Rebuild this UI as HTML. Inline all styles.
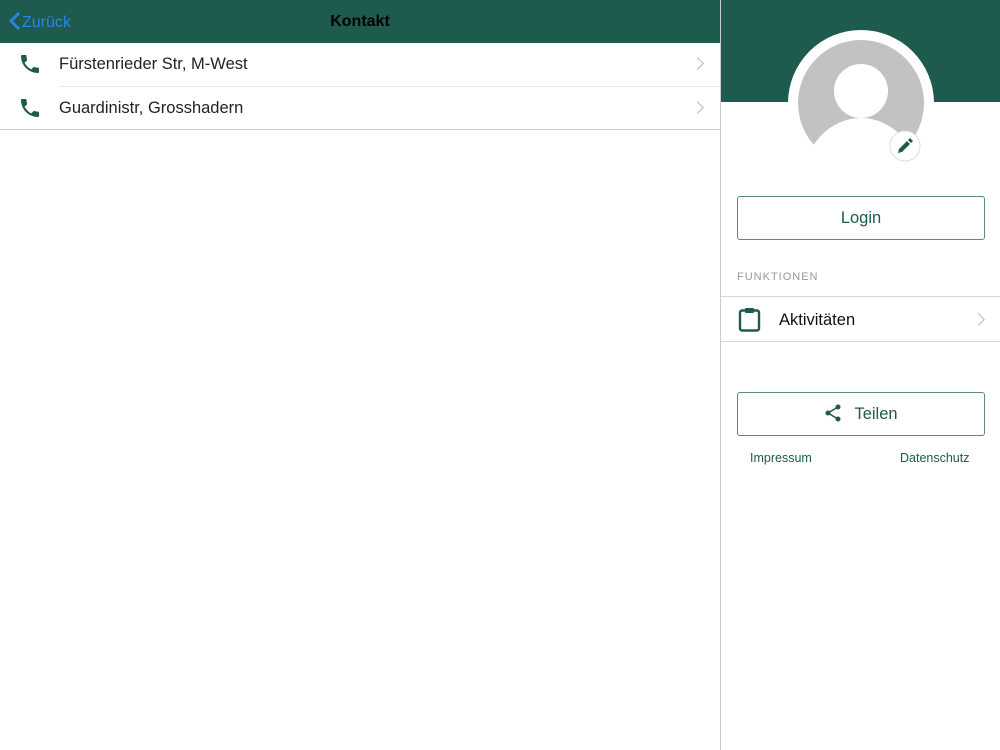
<!DOCTYPE html>
<html><head><meta charset="utf-8"><style>
*{margin:0;padding:0;box-sizing:border-box}
body{width:1000px;height:750px;position:relative;background:#fff;font-family:"Liberation Sans",Arial,sans-serif;overflow:hidden}
.hdr{position:absolute;left:0;top:0;width:720px;height:43px;background:#1e5a4e}
.back{position:absolute;left:8px;top:12px;color:#2a86e6;font-size:16px}
.title{position:absolute;left:0;width:720px;top:13px;text-align:center;font-weight:bold;font-size:16px;color:#000}
.row{position:absolute;left:0;width:720px;height:43px}
.row .t{position:absolute;left:59px;top:12px;font-size:16.5px;color:#222}
.chev{position:absolute;width:9px;height:9px;border-right:1.5px solid #bbb;border-top:1.5px solid #bbb;transform:rotate(45deg)}
.line{position:absolute;height:1px;background:#ddd}
.side{position:absolute;left:720px;top:0;width:280px;height:750px;border-left:1px solid #ccc}
.btn{position:absolute;left:16px;width:248px;height:44px;border:1.5px solid #5a8a7f;border-radius:3px;color:#1e5a4e;font-size:16.5px;text-align:center;line-height:42px}
</style></head><body>
<div class="hdr"><div class="back"><svg width="14" height="18" viewBox="0 0 14 18" style="vertical-align:-3px"><path d="M11 1 L3 9 L11 17" stroke="#2a86e6" stroke-width="2.8" fill="none"/></svg>Zurück</div><div class="title">Kontakt</div></div>
<div class="row" style="top:43px">
<svg style="position:absolute;left:18px;top:9px" width="24" height="24" viewBox="0 0 24 24"><path fill="#1e5a4e" d="M6.6 10.8c1.4 2.8 3.8 5.1 6.6 6.6l2.2-2.2c.3-.3.7-.4 1-.2 1.1.4 2.3.6 3.6.6.6 0 1 .4 1 1V20c0 .6-.4 1-1 1C10.6 21 3 13.4 3 4c0-.6.4-1 1-1h3.5c.6 0 1 .4 1 1 0 1.3.2 2.5.6 3.6.1.3 0 .7-.2 1L6.6 10.8z"/></svg>
<div class="t">Fürstenrieder Str, M-West</div><div class="chev" style="left:693px;top:16px"></div></div>
<div class="line" style="left:59px;top:86px;width:661px;background:#e6e6e6"></div>
<div class="row" style="top:87px">
<svg style="position:absolute;left:18px;top:9px" width="24" height="24" viewBox="0 0 24 24"><path fill="#1e5a4e" d="M6.6 10.8c1.4 2.8 3.8 5.1 6.6 6.6l2.2-2.2c.3-.3.7-.4 1-.2 1.1.4 2.3.6 3.6.6.6 0 1 .4 1 1V20c0 .6-.4 1-1 1C10.6 21 3 13.4 3 4c0-.6.4-1 1-1h3.5c.6 0 1 .4 1 1 0 1.3.2 2.5.6 3.6.1.3 0 .7-.2 1L6.6 10.8z"/></svg>
<div class="t">Guardinistr, Grosshadern</div><div class="chev" style="left:693px;top:16px"></div></div>
<div class="line" style="left:0;top:129px;width:720px;background:#ccc"></div>
<div class="side">
<div style="position:absolute;left:0;top:0;width:280px;height:102px;background:#1e5a4e"></div>
<svg style="position:absolute;left:0;top:0" width="280" height="200">
<defs><clipPath id="c"><circle cx="140" cy="103" r="63"/></clipPath></defs>
<circle cx="140" cy="103" r="73" fill="#fff"/>
<circle cx="140" cy="103" r="63" fill="#c2c2c2"/>
<g clip-path="url(#c)"><circle cx="140" cy="91" r="27" fill="#fff"/></g>
<ellipse cx="140" cy="182" rx="58" ry="64" fill="#fff"/>
<circle cx="184" cy="146" r="15" fill="#fff" stroke="#ddd" stroke-width="1"/>
<path d="M177 153 l1-4 8-8 3 3-8 8z M187 140 l2-2 3 3-2 2z" fill="#1e5a4e"/>
</svg>
<div class="btn" style="top:196px">Login</div>
<div style="position:absolute;left:16px;top:271px;font-size:11px;letter-spacing:1px;color:#999">FUNKTIONEN</div>
<div class="line" style="left:0;top:296px;width:280px;background:#d6d6d6"></div>
<svg style="position:absolute;left:17px;top:307px" width="24" height="26" viewBox="0 0 24 26"><rect x="2" y="3.5" width="19" height="20" rx="2" fill="none" stroke="#1e5a4e" stroke-width="2.4"/><rect x="7" y="1" width="9" height="5" rx="1" fill="#1e5a4e"/></svg>
<div style="position:absolute;left:58px;top:311px;font-size:16.5px;color:#111">Aktivitäten</div>
<div class="chev" style="left:253px;top:315px"></div>
<div class="line" style="left:0;top:341px;width:280px;background:#d6d6d6"></div>
<div class="btn" style="top:392px"><svg width="18" height="18" viewBox="0 0 18 18" style="vertical-align:-3px;margin-right:12px"><circle cx="14" cy="3" r="2.5" fill="#1e5a4e"/><circle cx="4" cy="9" r="2.5" fill="#1e5a4e"/><circle cx="14" cy="15" r="2.5" fill="#1e5a4e"/><path d="M14 3 L4 9 L14 15" stroke="#1e5a4e" stroke-width="1.6" fill="none"/></svg>Teilen</div>
<div style="position:absolute;left:29px;top:451px;font-size:12.5px;color:#1e5a4e">Impressum</div>
<div style="position:absolute;left:179px;top:451px;font-size:12.5px;color:#1e5a4e">Datenschutz</div>
</div>
</body></html>
